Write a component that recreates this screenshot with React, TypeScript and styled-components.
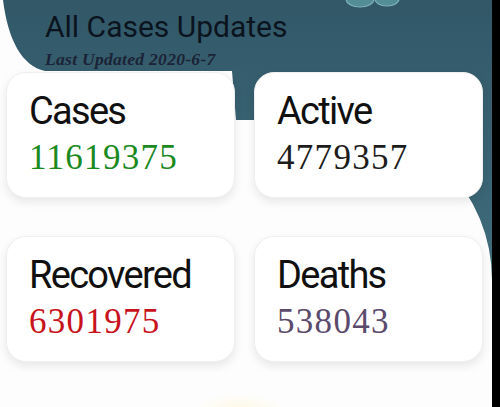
import React from "react";
import styled, { createGlobalStyle } from "styled-components";

const Global = createGlobalStyle`
  html, body { margin: 0; padding: 0; background: #ffffff; }
  body { width: 500px; height: 407px; overflow: hidden; }
`;

const Screen = styled.div`
  display: flex;
  width: 500px;
  height: 407px;
  background: #000;
`;

const Main = styled.div`
  position: relative;
  width: 492px;
  height: 407px;
  background: #fdfdfd;
  overflow: hidden;
`;

const Backdrop = styled.svg`
  position: absolute;
  left: 0;
  top: 0;
  width: 492px;
  height: 407px;
`;

const Content = styled.div`
  position: relative;
  display: flex;
  flex-direction: column;
  padding-top: 12px;
`;

const Title = styled.h1`
  margin: 0 0 0 45px;
  font-family: Roboto, "Noto Sans", sans-serif;
  font-weight: 400;
  font-size: 30px;
  line-height: 30px;
  color: #0b141e;
`;

const Subtitle = styled.div`
  margin: 8px 0 0 45px;
  font-family: "Liberation Serif", serif;
  font-style: italic;
  font-weight: 700;
  font-size: 17.5px;
  line-height: 18px;
  letter-spacing: 0.3px;
  color: #1b2336;
`;

const Grid = styled.div`
  display: grid;
  grid-template-columns: 229px 229px;
  column-gap: 19px;
  row-gap: 38px;
  margin: 4px 0 0 6px;
`;

const Card = styled.div`
  box-sizing: border-box;
  height: 126px;
  padding: 18px 0 0 22px;
  background: #ffffff;
  border-radius: 20px;
  border: 1px solid #efefef;
  box-shadow: 0 4px 10px rgba(0, 0, 0, 0.09);
  display: flex;
  flex-direction: column;
`;

const Label = styled.div`
  font-family: Roboto, "Noto Sans", sans-serif;
  font-size: 38px;
  line-height: 40px;
  letter-spacing: -1.7px;
  color: #101010;
`;

const Value = styled.div<{ $color: string }>`
  margin-top: 7px;
  font-family: "Liberation Serif", serif;
  font-size: 35px;
  line-height: 40px;
  letter-spacing: 1.3px;
  color: ${(p) => p.$color};
`;

const Glow = styled.div`
  position: absolute;
  left: 195px;
  top: 394px;
  width: 90px;
  height: 26px;
  border-radius: 50%;
  background: radial-gradient(ellipse at center, rgba(255, 243, 190, 0.35), rgba(255, 250, 220, 0) 70%);
`;

const stats = [
  { label: "Cases", value: "11619375", color: "#1a8a1f" },
  { label: "Active", value: "4779357", color: "#1c1c1c" },
  { label: "Recovered", value: "6301975", color: "#c8121c" },
  { label: "Deaths", value: "538043", color: "#5b4a6c" },
];

export default function App() {
  return (
    <>
      <Global />
      <Screen>
        <Main>
          <Backdrop viewBox="0 0 492 407">
            <defs>
              <linearGradient id="teal" x1="0" y1="0" x2="0" y2="1">
                <stop offset="0" stopColor="#325868" />
                <stop offset="1" stopColor="#3f6c7b" />
              </linearGradient>
            </defs>
            <path
              d="M3,0 L492,0 L492,280 A160,160 0 0 0 332,120 L236,120 L232,71 L45,71 C22,66 8,40 3,0 Z"
              fill="url(#teal)"
            />
            <g opacity="0.75">
              <ellipse cx="360" cy="-1" rx="14" ry="8" fill="#5f9fa6" />
              <ellipse cx="387" cy="-1" rx="12" ry="7" fill="#5f9fa6" />
              <ellipse cx="360" cy="-1" rx="14" ry="8" fill="none" stroke="#9bd3d4" strokeWidth="1.2" />
              <ellipse cx="387" cy="-1" rx="12" ry="7" fill="none" stroke="#9bd3d4" strokeWidth="1.2" />
            </g>
          </Backdrop>
          <Glow />
          <Content>
            <Title>All Cases Updates</Title>
            <Subtitle>Last Updated 2020-6-7</Subtitle>
            <Grid>
              {stats.map((s) => (
                <Card key={s.label}>
                  <Label>{s.label}</Label>
                  <Value $color={s.color}>{s.value}</Value>
                </Card>
              ))}
            </Grid>
          </Content>
        </Main>
      </Screen>
    </>
  );
}
